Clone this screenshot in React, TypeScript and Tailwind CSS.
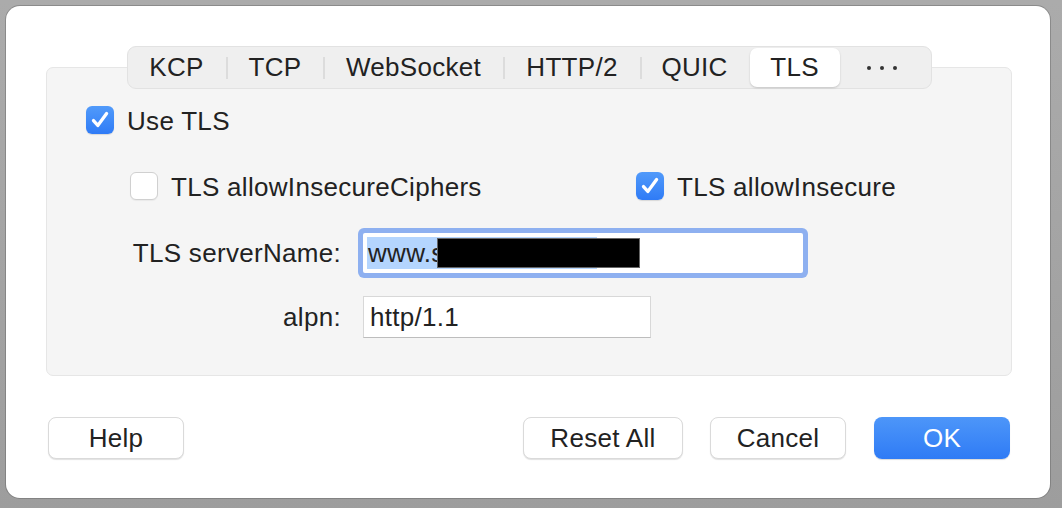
import React from 'react';

const Check = ({ on }: { on: boolean }) =>
  on ? (
    <span className="flex size-[28px] shrink-0 items-center justify-center rounded-[6px] bg-linear-to-b from-[#519afa] to-[#2f7bf6] shadow-[0_1px_1px_rgba(0,0,0,0.12)]">
      <svg viewBox="0 0 24 24" className="size-[24px]" fill="none" stroke="white" strokeWidth={3.3} strokeLinecap="round" strokeLinejoin="round">
        <path d="M5.5 12.6l4.3 4.8L18.6 5.6" />
      </svg>
    </span>
  ) : (
    <span className="size-[28px] shrink-0 rounded-[6px] border border-[#d0d0d0] bg-white shadow-[0_1px_1px_rgba(0,0,0,0.05)]" />
  );

const Sep = () => <span className="h-[22px] w-[2px] shrink-0 bg-[#dcdcdc]" />;

const Tab = ({ label, w }: { label: string; w: string }) => (
  <span className={`flex h-full shrink-0 items-center justify-center ${w}`}>{label}</span>
);

const Btn = ({ label, w, primary }: { label: string; w: string; primary?: boolean }) => (
  <button
    className={`flex h-[42px] items-center justify-center rounded-[8px] ${w} ${
      primary
        ? 'bg-linear-to-b from-[#4d96f9] to-[#2f7bf5] text-white shadow-[0_1px_1px_rgba(0,0,0,0.15)]'
        : 'border border-[#dadada] bg-white text-[#222] shadow-[0_1px_1px_rgba(0,0,0,0.12)]'
    }`}
  >
    {label}
  </button>
);

export default function App() {
  return (
    <div className="h-[508px] w-[1062px] overflow-hidden bg-linear-to-b from-[#ababab] to-[#9d9d9d] pl-[6px] pt-[6px] font-['Liberation_Sans',Arial,sans-serif] text-[26px] tracking-[0.3px] text-[#222]">
      <div className="h-[492px] w-[1044px] rounded-[14px] bg-white pl-[40px] pr-[38px] pt-[40px] shadow-[0_0_0_1px_rgba(80,80,80,0.35)]">
        {/* tab strip */}
        <div className="relative z-10 mx-auto flex h-[43px] w-[805px] items-center rounded-[9px] border border-[#e2e2e2] bg-[#efefef]">
          <Tab label="KCP" w="w-[98px]" />
          <Sep />
          <Tab label="TCP" w="w-[95px]" />
          <Sep />
          <Tab label="WebSocket" w="w-[178px]" />
          <Sep />
          <Tab label="HTTP/2" w="w-[135px]" />
          <Sep />
          <Tab label="QUIC" w="w-[106px]" />
          <span className="flex h-full w-[94px] shrink-0 items-center justify-center py-[1px]">
            <span className="flex h-full w-[90px] items-center justify-center rounded-[7px] bg-white shadow-[0_1px_2px_rgba(0,0,0,0.18)]">
              TLS
            </span>
          </span>
          <span className="flex flex-1 items-center justify-center gap-[9px] pr-[8px]">
            <span className="size-[4px] rounded-full bg-[#333]" />
            <span className="size-[4px] rounded-full bg-[#333]" />
            <span className="size-[4px] rounded-full bg-[#333]" />
          </span>
        </div>

        {/* group box */}
        <div className="-mt-[22px] flex h-[309px] flex-col rounded-[7px] border border-[#e6e6e6] bg-[#f5f5f5] pt-[38px]">
          <div className="flex h-[28px] items-center gap-[13px] pl-[39px]">
            <Check on />
            <span className="pt-[3px]">Use TLS</span>
          </div>

          <div className="mt-[38px] flex h-[28px] items-center pl-[83px]">
            <div className="flex w-[506px] items-center gap-[13px]">
              <Check on={false} />
              <span className="pt-[2px]">TLS allowInsecureCiphers</span>
            </div>
            <div className="flex items-center gap-[13px]">
              <Check on />
              <span className="pt-[2px]">TLS allowInsecure</span>
            </div>
          </div>

          <div className="mt-[32px] flex items-center">
            <span className="w-[294px] pt-[2px] text-right">TLS serverName:</span>
            <div className="relative ml-[22px] flex h-[40px] w-[440px] items-center rounded-[2px] bg-white pl-[4px] shadow-[0_0_0_5px_#8eb0f0]">
              <span className="flex h-[32px] w-[230px] items-center bg-[#b4d5fe] pl-[1px] pt-[2px]">www.s</span>
              <span className="absolute left-[74px] top-[5px] h-[30px] w-[203px] border border-[#666] bg-black" />
            </div>
          </div>

          <div className="mt-[23px] flex items-center">
            <span className="w-[294px] text-right">alpn:</span>
            <div className="ml-[22px] flex h-[42px] w-[288px] items-center border border-[#d8d8d8] border-b-[#bdbdbd] bg-white pl-[6px]">
              http/1.1
            </div>
          </div>
        </div>

        {/* buttons */}
        <div className="mt-[41px] flex items-center pl-[2px] pr-[2px]">
          <Btn label="Help" w="w-[136px]" />
          <div className="flex-1" />
          <Btn label="Reset All" w="w-[160px]" />
          <div className="w-[27px]" />
          <Btn label="Cancel" w="w-[136px]" />
          <div className="w-[28px]" />
          <Btn label="OK" w="w-[136px]" primary />
        </div>
      </div>
    </div>
  );
}
